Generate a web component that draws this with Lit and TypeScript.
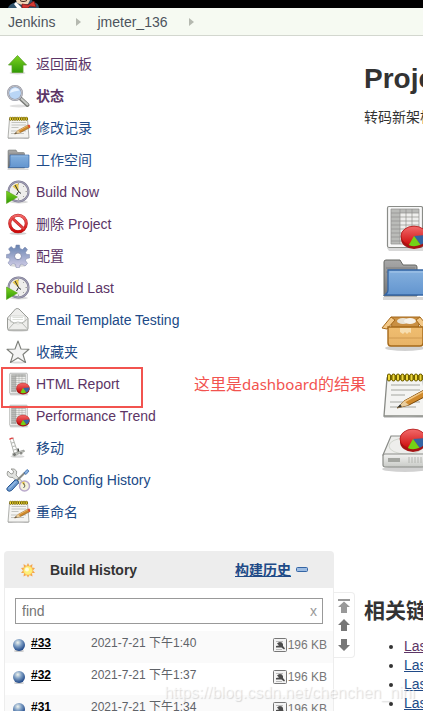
import { LitElement, html, svg, css, nothing } from "lit";
import type { SVGTemplateResult } from "lit";
import { customElement, property } from "lit/decorators.js";
import { classMap } from "lit/directives/class-map.js";

const pie = (cx: number, cy: number, r: number) => svg`
  <ellipse cx=${cx} cy=${cy + 3} rx=${r} ry=${r * 0.76} fill="#a51414"/>
  <ellipse cx=${cx} cy=${cy} rx=${r} ry=${r * 0.76} fill="url(#red)" stroke="#b01010" stroke-width=".8"/>
  <path d="M${cx} ${cy}L${cx + r} ${cy - 1}Q${cx + r} ${cy + r * 0.5} ${cx + r * 0.5} ${cy + r * 0.68}Z" fill="#3465a4"/>
  <path d="M${cx} ${cy}L${cx + r * 0.5} ${cy + r * 0.68}Q${cx} ${cy + r * 0.9} ${cx - r * 0.4} ${cy + r * 0.7}Z" fill="#73d216"/>`;

const clock = svg`
  <ellipse cx="26" cy="44" rx="18" ry="3" fill="#000" opacity=".15"/>
  <circle cx="25" cy="23" r="20" fill="#eeeeec" stroke="#77758f" stroke-width="4"/>
  <circle cx="25" cy="23" r="20" fill="none" stroke="#b9b8c9" stroke-width="1.500"/>
  <path d="M25 23L13 13Q18 7 25 7Z" fill="#e9c94e"/>
  <path d="M18 10L25 23L30 27M25 23L21 30" stroke="#2e3436" stroke-width="2" fill="none"/>
  <path d="M25 6v3M42 23h-3M25 40v-3M36 12l-2 2M36 34l-2-2" stroke="#888a85" stroke-width="1.500"/>
  <path d="M1 22L23 34L1 47Z" fill="url(#green)" stroke="#4e9a06"/>`;

const notepad = svg`
  <path d="M4 43Q24 47 45 43V46H4Z" fill="#000" opacity=".18"/>
  <path d="M7 6H43L46 44H4Z" fill="#f4f4f2" stroke="#888a85" stroke-width="1.300"/>
  <path d="M11 13H40M11 18H40M11 23H25M10 30H40M10 35H36" stroke="#a3a5a0" stroke-width="1.200"/>
  <rect x="7" y="3" width="37" height="5" fill="#857200"/>
  <path d="M9 3.500v4M13.500 3.500v4M18 3.500v4M22.500 3.500v4M27 3.500v4M31.500 3.500v4M36 3.500v4M40.500 3.500v4" stroke="#6b5c00" stroke-width="3.800" stroke-linecap="round"/>
  <path d="M9 3.500v4M13.500 3.500v4M18 3.500v4M22.500 3.500v4M27 3.500v4M31.500 3.500v4M36 3.500v4M40.500 3.500v4" stroke="#f0d93b" stroke-width="2" stroke-linecap="round"/>
  <path d="M17 36L24 29L44 18L48 23L29 33Z" fill="#d08a2c" stroke="#7a4a0c"/>
  <path d="M24 30L44 19" stroke="#f3c783" stroke-width="1.500"/>
  <path d="M17 36L24 29L29 33Z" fill="#e9cfa0"/><path d="M17 36L20 32.500L22 34.500Z" fill="#2e3436"/>
  <path d="M43 18.500L46 17Q49 18 48.500 22L46.500 24Z" fill="#dd4a35"/>`;

const folder = svg`
  <path d="M3 41H45V44H3Z" fill="#000" opacity=".15"/>
  <path d="M4 40V6Q4 4 6 4H20L23 9H35Q37 9 37 11V40Z" fill="url(#grey)" stroke="#666864"/>
  <path d="M6 12H35M6 16H35" stroke="#777" stroke-width=".8"/>
  <path d="M8 14H46V37Q46 39 44 39H5Q8 37 8 34Z" fill="url(#blue)" stroke="#3465a4" stroke-width="1.300"/>
  <path d="M10 16H44" stroke="#a8c8ea" stroke-width="1"/>`;

const report = svg`
  <path d="M7 44H45L43 47H9Z" fill="#000" opacity=".15"/>
  <rect x="7.500" y="2.500" width="35" height="41" rx="1.500" fill="#f8f8f8" stroke="#8a8c88" stroke-width="1.200"/>
  <rect x="11" y="5" width="28" height="35" fill="#eeeeec"/>
  <path d="M11 5H39V9H11ZM11 9H20V40H11Z" fill="#babbb8"/>
  <path d="M11 5V40M20 5V40M26 5V40M32 5V40M39 5V40M11 5H39M11 9H39M11 13H39M11 17H39M11 21H39M11 25H39M11 29H39M11 33H39M11 37H39M11 40H39" stroke="#8f918d" stroke-width=".7" fill="none"/>
  ${pie(34, 32, 13)}`;

const icons: Record<string, SVGTemplateResult> = {
  clock,
  notepad,
  folder,
  report,
  up: svg`
    <ellipse cx="23" cy="42" rx="16" ry="3" fill="#000" opacity=".15"/>
    <path d="M23 7L41 26H34V41H12V26H5Z" fill="url(#green)" stroke="#5aa02c" stroke-width="1.600"/>`,
  search: svg`
    <ellipse cx="26" cy="44" rx="19" ry="3" fill="#000" opacity=".12"/>
    <path d="M29 29L43 42" stroke="#777975" stroke-width="8" stroke-linecap="round"/>
    <path d="M31 30L43 41" stroke="#c8cac6" stroke-width="4" stroke-linecap="round"/>
    <circle cx="18" cy="18" r="14" fill="#b9d5f5" stroke="#8b8d99" stroke-width="4"/>
    <circle cx="18" cy="18" r="14" fill="none" stroke="#dcdde3" stroke-width="1.500"/>
    <path d="M8 18Q9 9 19 8Q25 8 27 13Q15 14 8 18Z" fill="#e9f3ff"/>`,
  stop: svg`
    <ellipse cx="24" cy="43" rx="17" ry="3" fill="#000" opacity=".18"/>
    <circle cx="24" cy="23" r="16.500" fill="#fff" stroke="#b82020" stroke-width="6"/>
    <path d="M12 12L36 34" stroke="#b82020" stroke-width="6"/>
    <circle cx="24" cy="23" r="16.500" fill="none" stroke="url(#red)" stroke-width="4.500"/>
    <path d="M12 12L36 34" stroke="#e03f3f" stroke-width="4.500"/>`,
  gear: svg`
    <ellipse cx="24" cy="43" rx="17" ry="3" fill="#000" opacity=".15"/>
    <path d="M20 2H27L28 9L33 11L38 6L43 11L39 17L41 21H47V28L41 29L39 33L43 39L38 44L32 40L28 42L27 47H20L19 41L14 39L9 43L4 38L8 32L6 28H1V21L7 20L9 16L5 10L10 5L15 9L19 8Z" fill="url(#steel)" stroke="#7c87ab" stroke-width="1"/>
    <circle cx="24" cy="24.500" r="7" fill="#fff" stroke="#8089ad" stroke-width="2"/>`,
  mail: svg`
    <ellipse cx="24" cy="45" rx="21" ry="2" fill="#000" opacity=".2"/>
    <path d="M3 20L19 2Q22 0 26 2L44 20V41Q44 44 41 44H6Q3 44 3 41Z" fill="#eeeeec" stroke="#999b96" stroke-width="2"/>
    <path d="M9 16H38V28L24 32L9 28Z" fill="#fff" stroke="#c4c6c1" stroke-width="1.300"/>
    <path d="M13 19H34M13 23H34" stroke="#d3d7cf" stroke-width="1.500"/>
    <path d="M4 22L16 30Q24 26 32 30L43 22M16 30L5 42M32 30L43 42" stroke="#aaaca7" stroke-width="1.600" fill="none"/>`,
  star: svg`
    <ellipse cx="24" cy="45" rx="17" ry="2" fill="#000" opacity=".15"/>
    <path d="M24 2L30 18L46 18.500L34 29L39 45L24 35.500L9 45L14 29L2 18.500L18 18Z" fill="#f4f4f4" stroke="#7d7f7a" stroke-width="2.200" stroke-linejoin="round"/>`,
  truck: svg`
    <ellipse cx="23" cy="41" rx="14" ry="2.500" fill="#000" opacity=".15"/>
    <path d="M7 7Q10 3 15 5" stroke="#e04545" stroke-width="3" fill="none"/>
    <path d="M14 5L23 32M9 9L16 34M11 14L16 13M13 21L18 20M15 28L20 27" stroke="#b0b2ad" stroke-width="2" fill="none"/>
    <path d="M16 34L36 28L37 31L20 38Z" fill="#babdb6" stroke="#777975"/>
    <circle cx="17" cy="37" r="4" fill="#777975" stroke="#c8cac6" stroke-width="2"/>
    <circle cx="30" cy="34" r="3" fill="#777975" stroke="#c8cac6" stroke-width="1.500"/>
    <path d="M24 25L25 31" stroke="#3c3f3a" stroke-width="3"/>`,
  tools: svg`
    <path d="M4 6L10 12L14 11L15 6L10 2Q17 0 21 6Q22 10 20 14L34 29L28 34L14 19Q7 20 3 15Q1 10 4 6Z" fill="#e2e3e0" stroke="#8a8c87" stroke-width="1.600"/>
    <path d="M22 25L38 9" stroke="#8a8c87" stroke-width="4"/>
    <path d="M36 10L42 3L46 6L40 13Z" fill="#8cb3e0" stroke="#3465a4" stroke-width="1.500"/>
    <path d="M3 39L18 24Q21 23 24 26Q26 29 24 31L11 45Q6 48 3 45Q0 42 3 39Z" fill="#6d9bd1" stroke="#24518c" stroke-width="2"/>
    <path d="M6 41L20 27" stroke="#b8d3f1" stroke-width="2"/>
    <circle cx="37" cy="36" r="10" fill="#f5f2dd" stroke="#b9a9cc" stroke-width="3"/>
    <path d="M37 36L31 29Q34 27 37 27Z" fill="#e9c94e"/>
    <path d="M35 30L38 36L35 40" stroke="#2e3436" stroke-width="1.500" fill="none"/>`,
  box: svg`
    <ellipse cx="25" cy="40" rx="20" ry="3" fill="#000" opacity=".18"/>
    <path d="M11 9H40L38 21H12Z" fill="#c98f42" stroke="#a5691a"/>
    <ellipse cx="23" cy="13" rx="6" ry="3" fill="#e8e2d4"/><ellipse cx="30" cy="13" rx="6" ry="3" fill="#f6f2ea"/>
    <path d="M11 9L2 20L7 21L15 12Z" fill="#f3c887" stroke="#a5691a"/>
    <path d="M40 9L49 20L43 21L36 12Z" fill="#f3c887" stroke="#a5691a"/>
    <path d="M8 19H43V35Q43 38 40 38H11Q8 38 8 35Z" fill="url(#card)" stroke="#a5691a" stroke-width="1.400"/>
    <path d="M20 20H31V25L29 24L27 26L25 24L23 26L20 24Z" fill="#f7deb0"/>
    <path d="M9 30H42" stroke="#d09a50" stroke-width="1"/>`,
  drive: svg`
    <ellipse cx="25" cy="41" rx="23" ry="3" fill="#000" opacity=".18"/>
    <path d="M11 8H42L48 27H3Z" fill="#eeeeec" stroke="#8a8c88" stroke-width="1.200"/>
    <ellipse cx="26" cy="18" rx="17" ry="8" fill="none" stroke="#d3d7cf"/>
    <rect x="3" y="26" width="46" height="13" rx="2" fill="url(#metal)" stroke="#8a8c88" stroke-width="1.200"/>
    <path d="M8 30H20V34H8Z" fill="#a3a5a0"/>
    <path d="M29 29v6M32 29v6M35 29v6M38 29v6M41 29v6M44 29v6" stroke="#b4b6b1"/>
    ${pie(33, 11, 13)}`,
};

@customElement("ui-icon")
class UiIcon extends LitElement {
  @property() name = "up";
  static styles = css`
    :host { display: block; width: 24px; height: 24px; flex: none; }
    :host([large]) { width: 48px; height: 48px; }
    svg { display: block; width: 100%; height: 100%; overflow: visible; }
  `;
  render() {
    return html`<svg viewBox="0 0 48 48" aria-hidden="true">
      <defs>
        <linearGradient id="green" x2="0" y2="1"><stop stop-color="#7ed321"/><stop offset="1" stop-color="#2f9a05"/></linearGradient>
        <linearGradient id="red" x2="0" y2="1"><stop stop-color="#f26a6a"/><stop offset="1" stop-color="#cc0808"/></linearGradient>
        <linearGradient id="blue" x2="0" y2="1"><stop stop-color="#84b0de"/><stop offset="1" stop-color="#6395cf"/></linearGradient>
        <linearGradient id="grey" x2="0" y2="1"><stop stop-color="#a8a8a8"/><stop offset="1" stop-color="#757575"/></linearGradient>
        <linearGradient id="steel" x2="0" y2="1"><stop stop-color="#6682b0"/><stop offset="1" stop-color="#d4cfe8"/></linearGradient>
        <linearGradient id="card" x2="0" y2="1"><stop stop-color="#f0bd70"/><stop offset="1" stop-color="#e8b468"/></linearGradient>
        <linearGradient id="metal" x2="0" y2="1"><stop stop-color="#f2f2f1"/><stop offset="1" stop-color="#c8cac6"/></linearGradient>
      </defs>
      ${icons[this.name]}
    </svg>`;
  }
}

interface Task { icon: string; label: string; visited?: boolean; current?: boolean; marked?: boolean; }

const tasks: Task[] = [
  { icon: "up", label: "返回面板", visited: true },
  { icon: "search", label: "状态", visited: true, current: true },
  { icon: "notepad", label: "修改记录" },
  { icon: "folder", label: "工作空间" },
  { icon: "clock", label: "Build Now", visited: true },
  { icon: "stop", label: "删除 Project", visited: true },
  { icon: "gear", label: "配置", visited: true },
  { icon: "clock", label: "Rebuild Last", visited: true },
  { icon: "mail", label: "Email Template Testing" },
  { icon: "star", label: "收藏夹" },
  { icon: "report", label: "HTML Report", visited: true, marked: true },
  { icon: "report", label: "Performance Trend", visited: true },
  { icon: "truck", label: "移动" },
  { icon: "tools", label: "Job Config History" },
  { icon: "notepad", label: "重命名" },
];

const builds = [
  { id: "#33", date: "2021-7-21 下午1:40", size: "196 KB" },
  { id: "#32", date: "2021-7-21 下午1:37", size: "196 KB" },
  { id: "#31", date: "2021-7-21 下午1:34", size: "196 KB" },
];

const related = ["Last build (#33)", "Last stable build (#33)", "Last successful build (#33)", "Last completed build (#33)"];

@customElement("app-root")
class AppRoot extends LitElement {
  static styles = css`
    :host {
      display: flex; flex-direction: column; position: relative;
      height: 100vh; overflow: hidden; background: #fff; color: #333;
      font: 14px/20px "Liberation Sans", "Noto Sans CJK SC", sans-serif;
    }
    *, *::before { box-sizing: border-box; }
    a { color: #204a87; }
    a.visited { color: #5c3566; }
    h1, h2, ul, p { margin: 0; padding: 0; }
    ul { list-style: none; }
    svg { display: block; flex: none; }

    .top { flex: none; height: 8px; padding-left: 8px; background: #000; }
    .crumbs {
      flex: none; display: flex; align-items: center; height: 28px; padding-left: 8px;
      background: #f6faf2; border-bottom: 1px solid #d3d7cf;
    }
    .crumbs a { color: #4d545d; text-decoration: none; }
    .crumbs svg { margin: 0 16px 0 21px; }

    .page { display: flex; align-items: flex-start; }
    .side { flex: 0 0 340px; padding-top: 12px; }
    .task { position: relative; display: flex; align-items: center; gap: 6px; height: 32px; padding-left: 6px; }
    .task a { text-decoration: none; }
    .task a.current { font-weight: bold; }
    .frame { position: absolute; left: 1px; top: -1px; width: 142px; height: 41px; border: 2px solid #f2534f; z-index: 1; }
    .note { position: absolute; left: 194px; top: 4px; white-space: nowrap; color: #f2534f; font-size: 16px; line-height: 24px; }
    .note span { font-family: "Noto Sans", sans-serif; font-size: 15px; }

    .history { position: relative; margin: 23px 6px 0 4px; }
    .head {
      display: flex; align-items: center; height: 37px; padding: 0 26px 0 16px;
      background: #ededed; border-radius: 4px 4px 0 0; font-weight: bold;
    }
    .head h2 { margin-left: 14px; flex: 1; font-size: 14px; line-height: 20px; }
    .head a { margin-right: 5px; }
    .body { padding-top: 10px; border: solid #ededed; border-width: 0 1px; }
    .find { display: flex; align-items: center; margin: 0 10px 7px; height: 26px; border: 1px solid #999; }
    .find input {
      flex: 1; min-width: 0; border: 0; padding: 0 6px; outline: 0; background: none;
      font: inherit; color: #333;
    }
    .find input::placeholder { color: #757575; opacity: 1; }
    .find button { border: 0; background: none; padding: 0 5px; color: #999; font: inherit; }
    table { width: 100%; border-collapse: collapse; font-size: 12px; line-height: 16px; table-layout: fixed; }
    td { height: 32px; padding: 0; vertical-align: top; }
    tr:nth-child(odd) { background: #fafafa; }
    .num { width: 86px; }
    .cell { display: flex; align-items: flex-start; gap: 5px; padding: 4px 0 0 7px; }
    .cell svg { margin-top: 3px; }
    .num a { color: #000; font-weight: bold; }
    .date { padding-top: 4px; color: #5f6368; }
    .size { width: 80px; }
    .cell.log { justify-content: flex-end; gap: 1px; padding: 6px 6px 0 0; color: #777; }
    .cell.log svg { margin-top: 1px; }
    .pager {
      position: absolute; left: 100%; top: 41px; display: flex; flex-direction: column;
      align-items: center; gap: 6px; width: 21px; height: 66px; padding: 6px 0;
      border: 1px solid #ededed; border-left: 0; border-radius: 0 4px 4px 0;
    }
    .pager button { display: block; padding: 0; border: 0; background: none; }

    .main { flex: 1; min-width: 0; overflow: hidden; padding: 26px 0 0 24px; white-space: nowrap; }
    h1 { font-size: 28px; line-height: 34px; }
    .desc { margin-top: 11px; }
    .group { display: flex; flex-direction: column; gap: 4px; margin: 77px 0 0 16px; }
    .group + .group { gap: 8px; margin-top: 16px; }
    .group li { display: flex; align-items: center; gap: 10px; }
    .main h2 { margin-top: 123px; font-size: 21px; line-height: 24px; }
    .main .links { margin-top: 14px; padding-left: 40px; list-style: disc; line-height: 19px; }
    .mark {
      position: absolute; right: 8px; bottom: 6px; font-size: 16px; line-height: 24px;
      color: rgba(255, 255, 255, 0.6); text-shadow: 1px 1px 1px rgba(0, 0, 0, 0.14); pointer-events: none;
    }
  `;

  private arrow(label: string, kind: "top" | "up" | "down") {
    return html`<button aria-label=${label}>
      <svg width="12" height=${kind === "top" ? 14 : 13} viewBox=${kind === "top" ? "0 0 12 14" : "0 0 12 13"} fill=${kind === "top" ? "#999" : "#777"}>
        ${kind === "top"
          ? svg`<path d="M0 0H12V2H0ZM6 2.500L12 8H9V14H3V8H0Z"/>`
          : kind === "up"
            ? svg`<path d="M6 0L12 6H9V12H3V6H0Z"/>`
            : svg`<path d="M3 1H9V7H12L6 13L0 7H3Z"/>`}
      </svg>
    </button>`;
  }

  private crumb(label: string) {
    return html`<a href="#">${label}</a>
      <svg width="5" height="8" viewBox="0 0 5 8"><path d="M0 0L5 4L0 8Z" fill="#b5b9b0"/></svg>`;
  }

  render() {
    return html`
      <header class="top">
        <svg width="32" height="8" viewBox="0 0 32 8" aria-hidden="true">
          <path d="M0 8Q1 4 8 2L10 0H24L25 2Q31 3 31 8Z" fill="#31536b"/>
          <path d="M8 0H22L20 4L14 5L9 3Z" fill="#f0d6b7"/>
          <path d="M12 0Q15 2 19 0V1Q15 3 12 1Z" fill="#3a2018"/>
          <path d="M8 2L14 8H9L6 4Z" fill="#fff"/>
          <path d="M14 8V4L20 5L26 1L28 7L22 6L20 8Z" fill="#d33833" stroke="#7a1010" stroke-width=".7"/>
        </svg>
      </header>
      <nav class="crumbs">${this.crumb("Jenkins")}${this.crumb("jmeter_136")}</nav>
      <div class="page">
        <aside class="side">
          <ul>
            ${tasks.map((t) => html`<li class="task">
              <ui-icon name=${t.icon}></ui-icon>
              <a href="#" class=${classMap({ visited: !!t.visited, current: !!t.current })}>${t.label}</a>
              ${t.marked ? html`<div class="frame"></div><div class="note">这里是<span>dashboard</span>的结果</div>` : nothing}
            </li>`)}
          </ul>
          <section class="history">
            <div class="head">
              <svg width="16" height="16" viewBox="0 0 16 16" aria-hidden="true">
                <path d="M8 1L9.500 4L12.500 2L12 5.500L15 6L13 8.500L15 11L12 11L12.500 14.500L9.500 13L8 15.500L6.500 13L3.500 14.500L4 11L1 11L3 8.500L1 6L4 5.500L3.500 2L6.500 4Z" fill="#f5a54a"/>
                <circle cx="8" cy="8.500" r="4.500" fill="#fdf07a" stroke="#f8c860" stroke-width=".6"/>
                <circle cx="7" cy="7.500" r="2" fill="#fffce0"/>
              </svg>
              <h2>Build History</h2>
              <a href="#">构建历史</a>
              <svg width="12" height="5" viewBox="0 0 12 5" aria-hidden="true"><rect x=".5" y=".5" width="11" height="4" rx="1" fill="#9dbce2" stroke="#3465a4"/></svg>
            </div>
            <div class="body">
              <div class="find">
                <input type="text" placeholder="find" aria-label="find" />
                <button aria-label="clear">x</button>
              </div>
              <table>
                <tbody>
                  ${builds.map((b) => html`<tr>
                    <td class="num"><div class="cell">
                      <svg width="14" height="14" viewBox="0 0 14 14" aria-hidden="true">
                        <defs><radialGradient id="ball" cx=".4" cy=".3" r=".7">
                          <stop stop-color="#f0f4ee"/><stop offset=".45" stop-color="#7f9fc4"/><stop offset="1" stop-color="#1c4587"/>
                        </radialGradient></defs>
                        <ellipse cx="7" cy="13" rx="5" ry="1" fill="#000" opacity=".2"/>
                        <circle cx="7" cy="7" r="6" fill="url(#ball)"/>
                      </svg>
                      <a href="#">${b.id}</a>
                    </div></td>
                    <td><div class="date">${b.date}</div></td>
                    <td class="size"><div class="cell log">
                      <svg width="14" height="14" viewBox="0 0 14 14" aria-hidden="true">
                        <rect x=".5" y=".5" width="13" height="13" rx="1" fill="#f4f4f4" stroke="#777"/>
                        <path d="M3 3.500H10M3 11.500H9" stroke="#bbb"/>
                        <path d="M4 5.500Q6 3 9 4.500Q10.500 6 10 8L12 10.500L11 11.500L8.500 9.500H3V8L6 7.500Z" fill="#4c4c4c"/>
                      </svg>
                      <span>${b.size}</span>
                    </div></td>
                  </tr>`)}
                </tbody>
              </table>
            </div>
            <div class="pager">
              ${this.arrow("newest", "top")}${this.arrow("newer", "up")}${this.arrow("older", "down")}
            </div>
          </section>
        </aside>
        <main class="main">
          <h1>Project jmeter_136</h1>
          <p class="desc">转码新架构</p>
          <ul class="group">
            <li><ui-icon large name="report"></ui-icon></li>
            <li><ui-icon large name="folder"></ui-icon></li>
            <li><ui-icon large name="box"></ui-icon></li>
          </ul>
          <ul class="group">
            <li><ui-icon large name="notepad"></ui-icon></li>
            <li><ui-icon large name="drive"></ui-icon></li>
          </ul>
          <h2>相关链接</h2>
          <ul class="links">
            ${related.map((r, i) => html`<li><a href="#" class=${classMap({ visited: i === 0 })}>${r}</a></li>`)}
          </ul>
        </main>
      </div>
      <div class="mark">https://blog.csdn.net/chenchen_nini</div>
    `;
  }
}
